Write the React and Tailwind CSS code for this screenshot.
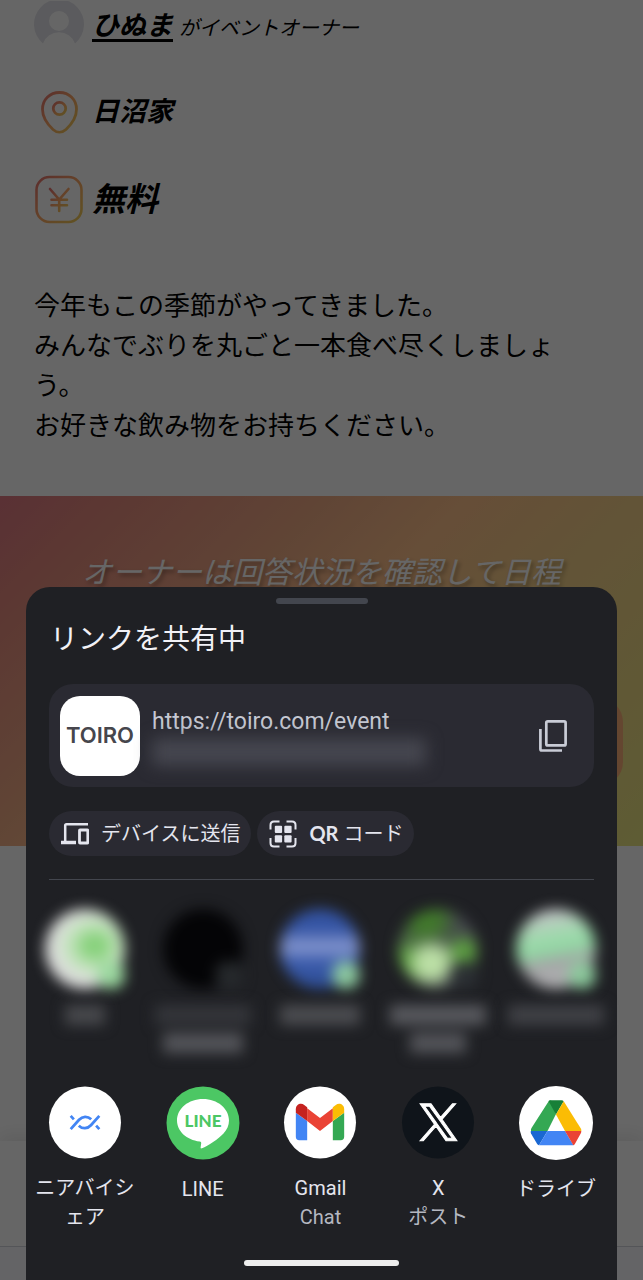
import { clsx } from 'clsx';

const sansJP = "font-['Noto_Sans_CJK_JP',sans-serif]";
const roboto = "font-['Roboto','Noto_Sans_CJK_JP',sans-serif]";

function BrandGradient({ id }) {
  return (
    <linearGradient id={id} x1="0" y1="0" x2="1" y2="1">
      <stop offset="0" stopColor="#e57470" />
      <stop offset="0.5" stopColor="#fca766" />
      <stop offset="1" stopColor="#f0d056" />
    </linearGradient>
  );
}

function AvatarIcon() {
  return (
    <svg viewBox="0 0 50 50" className="size-[50px]" aria-hidden="true">
      <path fill="#e4e4ea" fillRule="evenodd" d="M9 42.500A25 25 0 1 1 41 42.500A17 17 0 0 0 9 42.500ZM25 10a10 10 0 1 0 0 20a10 10 0 0 0 0-20Z" />
    </svg>
  );
}

function PinIcon() {
  return (
    <svg viewBox="0 0 50 50" className="size-[50px]" fill="none" stroke="url(#pin)" strokeWidth="2.800" aria-hidden="true">
      <defs><BrandGradient id="pin" /></defs>
      <path d="M25.500 5.500c9.700 0 17 7 17 16.800 0 8-5.500 15.500-10.500 20.200-4 3.600-9 3.600-13 0C14 37.800 8.500 30.300 8.500 22.300 8.500 12.500 15.800 5.500 25.500 5.500Z" />
      <circle cx="25.500" cy="21.500" r="6.200" />
    </svg>
  );
}

function YenIcon() {
  return (
    <svg viewBox="0 0 50 50" className="size-[50px]" fill="none" stroke="url(#yen)" strokeWidth="2.600" strokeLinecap="round" aria-hidden="true">
      <defs><BrandGradient id="yen" /></defs>
      <rect x="2.500" y="2" width="45" height="45" rx="13" />
      <path d="M16 14 25.200 24.500 34.500 14M25.200 24.500v11.500M17.500 24.700h15.500M17.500 30.200h15.500" />
    </svg>
  );
}

function CopyIcon() {
  return (
    <svg viewBox="0 0 28 32" className="h-8 w-7" fill="none" stroke="#c9ccd6" strokeWidth="2.700" aria-hidden="true">
      <rect x="7.300" y="1.400" width="19.300" height="24" rx="1.500" />
      <path d="M1.400 9v20q0 1.500 1.500 1.500H23" />
    </svg>
  );
}

function DevicesIcon() {
  return (
    <svg viewBox="0 0 28 24" className="h-6 w-7" fill="none" stroke="#e4e5ee" strokeWidth="2.500" aria-hidden="true">
      <path d="M27 2.200H5.500q-1.300 0-1.300 1.300V20" />
      <path d="M0 20.500h15" strokeWidth="3.500" />
      <rect x="18.500" y="8" width="8.300" height="13" rx="0.500" strokeWidth="2.800" />
    </svg>
  );
}

function QrIcon() {
  return (
    <svg viewBox="0 0 28 28" className="size-7" aria-hidden="true">
      <path fill="none" stroke="#e4e5ee" strokeWidth="2" d="M1.500 9.500V5q0-3.500 3.500-3.500H10.500M17.500 1.500H23q3.500 0 3.500 3.500v4.500M26.500 18v5q0 3.500-3.500 3.500h-5.500M10.500 26.500H5Q1.500 26.500 1.500 23v-5" />
      <g fill="#e4e5ee">
        <rect x="5.800" y="5.800" width="7.300" height="7.300" rx="1" />
        <rect x="15.300" y="5.800" width="7.300" height="7.300" rx="1" />
        <rect x="5.800" y="15.300" width="7.300" height="7.300" rx="1" />
        <rect x="15.300" y="15.300" width="7.300" height="7.300" rx="1" />
      </g>
    </svg>
  );
}

function NearbyIcon() {
  return (
    <svg viewBox="0 0 74 74" className="size-[74px]" aria-hidden="true">
      <circle cx="37" cy="37" r="36.500" fill="#fff" />
      <g fill="none" stroke="#4285f4" strokeWidth="2.800">
        <path d="M22.500 43.700 31 34.200c3.500-3.800 8.500-4 12.300-.4" />
        <path d="M51.500 30.300 43 39.800c-3.500 3.800-8.500 4-12.300.4" />
        <path d="M22.500 30.300l3.200 3.500M51.500 43.700l-3.200-3.500" />
      </g>
    </svg>
  );
}

function LineIcon() {
  return (
    <svg viewBox="0 0 74 74" className="size-[74px]" aria-hidden="true">
      <circle cx="37" cy="37" r="36.500" fill="#4cc764" />
      <path fill="#fff" d="M37 13c14.500 0 26 9.500 26 21.500 0 5-2 9-5.500 13C52.500 53 42 60 36 62.300c-1.600.6-1.400-.6-1.300-1.600l.5-3.500c0-.8-.3-1.500-1.400-1.700C20.500 54 11 45 11 34.500 11 22.500 22.500 13 37 13Z" />
      <text x="37" y="41" textAnchor="middle" fill="#4cc764" fontFamily="Lato, sans-serif" fontWeight="900" fontSize="17">LINE</text>
    </svg>
  );
}

function GmailIcon() {
  return (
    <svg viewBox="0 0 74 74" className="size-[74px]" aria-hidden="true">
      <circle cx="37" cy="37" r="36.500" fill="#fff" />
      <path fill="#4285f4" d="M12.500 27 24 35.500V55h-8a3.500 3.500 0 0 1-3.500-3.500Z" />
      <path fill="#34a853" d="M61.500 27 50 35.500V55h8a3.500 3.500 0 0 0 3.500-3.500Z" />
      <path fill="#ea4335" d="M24 22.500 37 32.500 50 22.500V35.500L37 45.500 24 35.500Z" />
      <path fill="#c5221f" d="M12.500 27v-3.500c0-5 5.200-6.800 8.500-4.300l3 2.300v14Z" />
      <path fill="#fbbc04" d="M61.500 27v-3.500c0-5-5.200-6.800-8.500-4.300l-3 2.300v14Z" />
    </svg>
  );
}

function XIcon() {
  return (
    <svg viewBox="0 0 74 74" className="size-[74px]" aria-hidden="true">
      <circle cx="37" cy="37" r="36.500" fill="#0f141a" />
      <g transform="translate(17.100 16.300) scale(1.700)">
        <path fill="#fff" stroke="#fff" strokeWidth="0.600" d="M14.095 10.316 22.286 1h-1.940L13.230 9.088 7.551 1H1l8.590 12.231L1 23h1.940l7.511-8.543L16.450 23H23l-8.905-12.684Zm-2.658 3.022-.872-1.218L3.640 2.430h2.980l5.590 7.820.869 1.219 7.265 10.166h-2.982l-5.926-8.297Z" />
      </g>
    </svg>
  );
}

function DriveIcon() {
  return (
    <svg viewBox="0 0 74 74" className="size-[74px]" aria-hidden="true">
      <circle cx="37" cy="37" r="37" fill="#fff" />
      <path fill="#34a853" d="M29.500 15.500Q30.300 14.200 32 14.200L37 28 28.500 45H12q-.4-1.500.5-3Z" />
      <path fill="#188038" d="M29.500 15Q30.300 14.200 32 14.200H42.500Q44 14.200 44.700 15.200L37 28.500Z" />
      <path fill="#fbbc04" d="M44.700 15.200 61.800 42.500q.8 1.300.5 2.500H46L37 28.500Z" />
      <path fill="#1967d2" d="M11.800 45H28.500L20 59.200q-1.300-.2-2-1.400L12 47.500Q11.500 46.500 11.800 45Z" />
      <path fill="#4285f4" d="M28.500 45H46l8.500 14.200H20Z" />
      <path fill="#ea4335" d="M46 45H62.300q0 1.500-.6 2.600L56 57.800q-.6 1.100-1.700 1.400Z" />
    </svg>
  );
}

const contacts = [
  {
    id: 'a',
    face: 'bg-[radial-gradient(ellipse_at_62%_46%,#84d078_12%,#c4e4be_36%,#dedede_60%)]',
    badge: 'bg-[#9cd8a0]',
    lines: ['w-10 bg-[#48494d]'],
  },
  { id: 'b', face: 'bg-[#040406]', badge: 'bg-[#26292c]', lines: ['w-24 bg-[#34353a]', 'w-20 bg-[#54555a]'] },
  {
    id: 'c',
    face: 'bg-[linear-gradient(180deg,#3454a4_25%,#8c9cd2_48%,#3c5cac_65%,#2c4c94)]',
    badge: 'bg-[#8cc8a0]',
    lines: ['w-20 bg-[#4c4d51]'],
  },
  {
    id: 'd',
    face: 'bg-[radial-gradient(circle_at_42%_68%,#bce0a6_18%,transparent_38%),radial-gradient(circle_at_82%_55%,#5ca040_10%,transparent_28%),radial-gradient(circle_at_8%_68%,#5ca040_10%,transparent_34%),radial-gradient(circle_at_35%_12%,#427a2c_14%,#45474d_38%)]',
    badge: 'bg-[#2c3034]',
    lines: ['w-24 bg-[#58595e]', 'w-14 bg-[#54555a]'],
  },
  {
    id: 'e',
    face: 'bg-[linear-gradient(170deg,#c4c4c8_10%,#a4d8b0_32%,#90d8a2_50%,#a4a4a6_65%,#b8b8ba)]',
    badge: 'bg-[#8cc89c]',
    lines: ['w-24 bg-[#404146]'],
  },
];

const apps = [
  { id: 'nearby', icon: NearbyIcon, name: 'ニアバイシェア' },
  { id: 'line', icon: LineIcon, name: 'LINE' },
  { id: 'gmail', icon: GmailIcon, name: 'Gmail', note: 'Chat' },
  { id: 'x', icon: XIcon, name: 'X', note: 'ポスト' },
  { id: 'drive', icon: DriveIcon, name: 'ドライブ' },
];

function EventPage() {
  return (
    <main className={clsx('flex h-screen flex-col overflow-hidden bg-white text-black', sansJP)}>
      <section className="pr-12 pl-[34px]">
        <div className="flex h-[52px] items-center gap-2">
          <AvatarIcon />
          <p className="pb-1 text-xl italic">
            <a href="#owner" className="mr-1.5 text-[27px] font-bold underline decoration-3 underline-offset-4">ひぬま</a>
            がイベントオーナー
          </p>
        </div>
        <div className="mt-9 flex h-12 items-center gap-2">
          <PinIcon />
          <p className="pb-1 text-[27px] font-bold italic">日沼家</p>
        </div>
        <div className="mt-10 flex h-12 items-center gap-2">
          <YenIcon />
          <p className="pb-1 text-[33px] font-bold italic">無料</p>
        </div>
        <p className="mt-[60px] text-[26px] leading-10">
          今年もこの季節がやってきました。<br />
          みんなでぶりを丸ごと一本食べ尽くしましょう。<br />
          お好きな飲み物をお持ちください。
        </p>
      </section>

      <section className="mt-[52px] h-[350px] shrink-0 bg-[linear-gradient(135deg,#e07a84,#e68c80_12%,#f0ac86_33%,#ffc28c_47%,#f5d28a_65%,#ebe682)] px-5 pt-[54px]">
        <p className="text-center text-[30px] leading-10 text-white italic [text-shadow:2px_3px_4px_rgba(0,0,0,0.35)]">
          オーナーは回答状況を確認して日程
        </p>
        <div className="mt-[108px] ml-5 h-[88px] rounded-3xl bg-[#fab078]" />
      </section>

      <div className="mt-[295px] h-[105px] shrink-0 bg-white shadow-[0_-6px_16px_rgba(0,0,0,0.08)]" />
      <div className="grow border-t border-gray-300 bg-[#fafaff]" />
    </main>
  );
}

function Contact({ face, badge, lines }) {
  return (
    <li className="flex h-[177px] flex-col items-center">
      <div className="relative size-20 blur-[7px]">
        <div className={clsx('size-full rounded-full', face)} />
        <div className={clsx('absolute right-0 bottom-0 size-7 rounded-full', badge)} />
      </div>
      <div className="mt-4 flex flex-col items-center gap-2 blur-[7px]">
        {lines.map((line) => (
          <div key={line} className={clsx('h-5', line)} />
        ))}
      </div>
    </li>
  );
}

function ShareSheet() {
  return (
    <div
      role="dialog"
      aria-label="リンクを共有中"
      className={clsx('absolute inset-x-[26px] bottom-0 flex flex-col rounded-t-3xl bg-[#1f2024] pt-[11px] text-[#e4e5ee]', roboto)}
    >
      <div className="mx-auto h-1.5 w-[92px] rounded-full bg-[#43464e]" />
      <h1 className="mt-4 px-6 text-[28px] leading-10 text-[#f1f1f6]">リンクを共有中</h1>

      <div className="mx-[23px] mt-6 flex h-[103px] items-center gap-3 rounded-3xl bg-[#2a2a32] pr-[27px] pl-[11px]">
        <div className="flex size-20 shrink-0 items-center justify-center rounded-[20px] bg-white font-['Inter',sans-serif] text-[22px] font-semibold text-[#46464c]">
          TOIRO
        </div>
        <div className="min-w-0 flex-1">
          <p className="text-[23px] leading-8 text-[#c5c8d2]">https://toiro.com/event</p>
          <div className="h-7 w-[274px] bg-[#45464f] blur-[8px]" />
        </div>
        <button type="button" aria-label="コピー"><CopyIcon /></button>
      </div>

      <div className="mx-[23px] mt-6 flex gap-1.5 text-xl">
        <button type="button" className="flex h-[45px] items-center gap-3 rounded-full bg-[#2a2a32] pr-[11px] pl-3">
          <DevicesIcon />
          デバイスに送信
        </button>
        <button type="button" className="flex h-[45px] items-center gap-3 rounded-full bg-[#2a2a32] pr-[11px] pl-3">
          <QrIcon />
          <span><span className="font-['Lato',sans-serif] font-bold">QR</span> コード</span>
        </button>
      </div>

      <hr className="mx-[23px] mt-[23px] border-[#43464e]" />

      <ul className="mt-[29px] mr-0.5 grid grid-cols-5">
        {contacts.map(({ id, ...contact }) => (
          <Contact key={id} {...contact} />
        ))}
      </ul>

      <ul className="mr-0.5 grid grid-cols-5 text-xl">
        {apps.map(({ id, icon: Icon, name, note }) => (
          <li key={id}>
            <button type="button" className="flex h-[146px] w-full flex-col items-center px-2 text-center leading-[29px]">
              <Icon />
              <span className="mt-[15px]">{name}</span>
              {note && <span className="text-[#b4b7c0]">{note}</span>}
            </button>
          </li>
        ))}
      </ul>

      <div className="mx-auto mt-7 mb-3.5 h-1.5 w-[155px] rounded-full bg-[#eeeeee]" />
    </div>
  );
}

export default function App() {
  return (
    <div className="relative h-screen overflow-hidden">
      <EventPage />
      <div className="absolute inset-0 bg-black/60" />
      <ShareSheet />
    </div>
  );
}
